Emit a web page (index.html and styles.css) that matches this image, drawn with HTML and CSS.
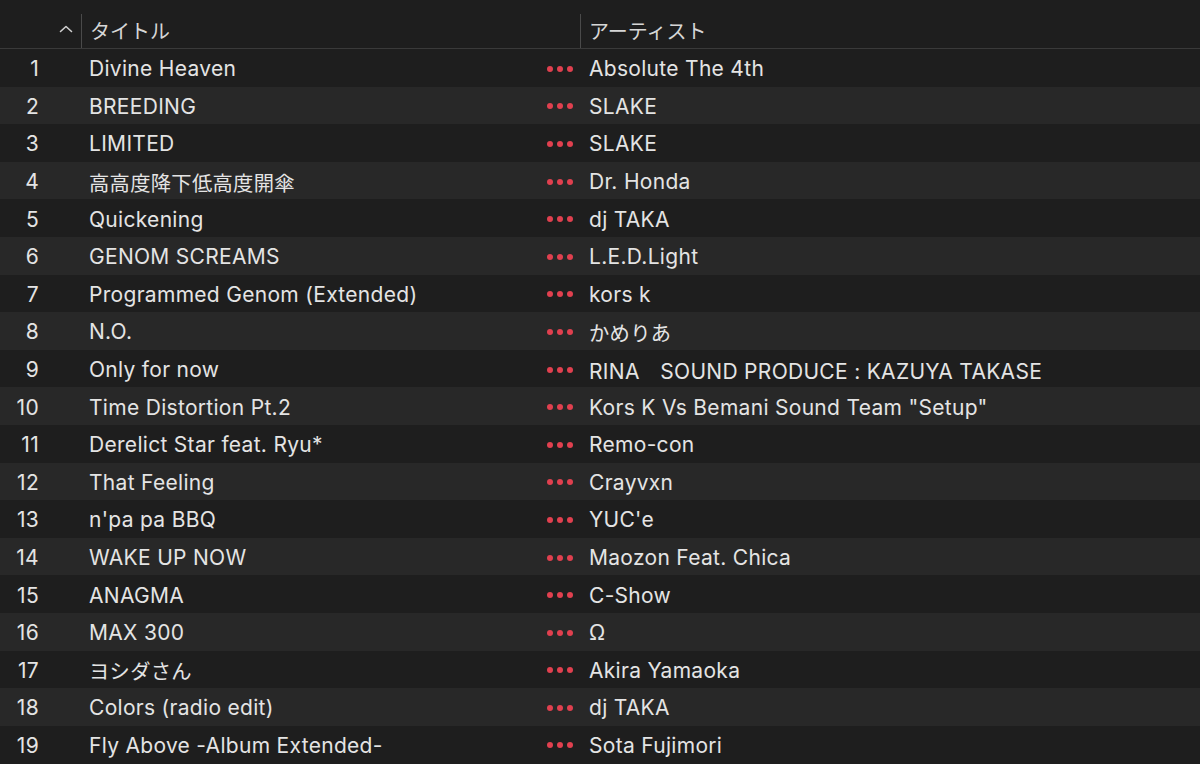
FILE: index.html
```html
<!DOCTYPE html>
<html lang="ja">
<head>
  <meta charset="utf-8">
  <title>Songs</title>
  <link rel="stylesheet" href="styles.css">
</head>
<body>

<div class="list">
  <div class="head">
    <div class="num">
      <svg class="sort" width="14" height="8" viewBox="0 0 14 8"><polyline points="1.5,6.5 7,1.5 12.5,6.5" fill="none" stroke="#d0d0d0" stroke-width="1.6" stroke-linecap="round" stroke-linejoin="round"/></svg>
    </div>
    <div class="col title">タイトル</div>
    <div class="col artist">アーティスト</div>
  </div>

  <div class="row"><div class="num">1</div><div class="title">Divine Heaven<span class="dots"><i></i><i></i><i></i></span></div><div class="artist">Absolute The 4th</div></div>
  <div class="row"><div class="num">2</div><div class="title">BREEDING<span class="dots"><i></i><i></i><i></i></span></div><div class="artist">SLAKE</div></div>
  <div class="row"><div class="num">3</div><div class="title">LIMITED<span class="dots"><i></i><i></i><i></i></span></div><div class="artist">SLAKE</div></div>
  <div class="row"><div class="num">4</div><div class="title"><span class="ja">高高度降下低高度開傘</span><span class="dots"><i></i><i></i><i></i></span></div><div class="artist">Dr. Honda</div></div>
  <div class="row"><div class="num">5</div><div class="title">Quickening<span class="dots"><i></i><i></i><i></i></span></div><div class="artist">dj TAKA</div></div>
  <div class="row"><div class="num">6</div><div class="title">GENOM SCREAMS<span class="dots"><i></i><i></i><i></i></span></div><div class="artist">L.E.D.Light</div></div>
  <div class="row"><div class="num">7</div><div class="title">Programmed Genom (Extended)<span class="dots"><i></i><i></i><i></i></span></div><div class="artist">kors k</div></div>
  <div class="row"><div class="num">8</div><div class="title">N.O.<span class="dots"><i></i><i></i><i></i></span></div><div class="artist"><span class="ja">かめりあ</span></div></div>
  <div class="row"><div class="num">9</div><div class="title">Only for now<span class="dots"><i></i><i></i><i></i></span></div><div class="artist">RINA<span class="ja">　</span>SOUND PRODUCE : KAZUYA TAKASE</div></div>
  <div class="row"><div class="num">10</div><div class="title">Time Distortion Pt.2<span class="dots"><i></i><i></i><i></i></span></div><div class="artist">Kors K Vs Bemani Sound Team "Setup"</div></div>
  <div class="row"><div class="num">11</div><div class="title">Derelict Star feat. Ryu*<span class="dots"><i></i><i></i><i></i></span></div><div class="artist">Remo-con</div></div>
  <div class="row"><div class="num">12</div><div class="title">That Feeling<span class="dots"><i></i><i></i><i></i></span></div><div class="artist">Crayvxn</div></div>
  <div class="row"><div class="num">13</div><div class="title">n'pa pa BBQ<span class="dots"><i></i><i></i><i></i></span></div><div class="artist">YUC'e</div></div>
  <div class="row"><div class="num">14</div><div class="title">WAKE UP NOW<span class="dots"><i></i><i></i><i></i></span></div><div class="artist">Maozon Feat. Chica</div></div>
  <div class="row"><div class="num">15</div><div class="title">ANAGMA<span class="dots"><i></i><i></i><i></i></span></div><div class="artist">C-Show</div></div>
  <div class="row"><div class="num">16</div><div class="title">MAX 300<span class="dots"><i></i><i></i><i></i></span></div><div class="artist">Ω</div></div>
  <div class="row"><div class="num">17</div><div class="title"><span class="ja">ヨシダさん</span><span class="dots"><i></i><i></i><i></i></span></div><div class="artist">Akira Yamaoka</div></div>
  <div class="row"><div class="num">18</div><div class="title">Colors (radio edit)<span class="dots"><i></i><i></i><i></i></span></div><div class="artist">dj TAKA</div></div>
  <div class="row"><div class="num">19</div><div class="title">Fly Above -Album Extended-<span class="dots"><i></i><i></i><i></i></span></div><div class="artist">Sota Fujimori</div></div>
</div>

</body>
</html>
```

FILE: styles.css
```css
body {
  margin: 0;
  background: #1e1e1e;
  color: #e4e4e4;
  font-family: 'Inter', 'Noto Sans CJK JP', sans-serif;
  font-size: 21px;
  letter-spacing: 0.3px;
  overflow: hidden;
}

.list {
  width: 1200px;
}

.head, .row {
  display: grid;
  grid-template-columns: 81px 499px 1fr;
  align-items: center;
}

.head {
  height: 48px;
  border-bottom: 1px solid #3a3a3a;
  color: #d6d6d6;
  font-size: 20px;
  letter-spacing: 0;
}

.head .num {
  align-self: stretch;
  display: flex;
  align-items: center;
  justify-content: flex-end;
  padding-right: 8px;
}

.sort {
  display: block;
  margin-top: 9px;
}

.head .col {
  height: 34px;
  align-self: end;
  border-left: 1px solid #4a4a4a;
  padding-left: 8px;
  padding-top: 3px;
  box-sizing: border-box;
  line-height: 30px;
}

.row {
  height: 37.6px;
  padding-top: 2px;
  box-sizing: border-box;
}

.row:nth-of-type(odd) {
  background: #282828;
}

.row .num {
  text-align: right;
  padding-right: 42px;
}

.ja {
  font-size: 20.3px;
  letter-spacing: 0.3px;
}

.row .title {
  padding-left: 8px;
  display: flex;
  align-items: center;
  justify-content: space-between;
  padding-right: 7px;
  white-space: nowrap;
}

.row .artist {
  padding-left: 9px;
  white-space: nowrap;
}

.dots {
  display: flex;
  gap: 4px;
}

.dots i {
  width: 6px;
  height: 6px;
  border-radius: 50%;
  background: #e0404f;
}
```
